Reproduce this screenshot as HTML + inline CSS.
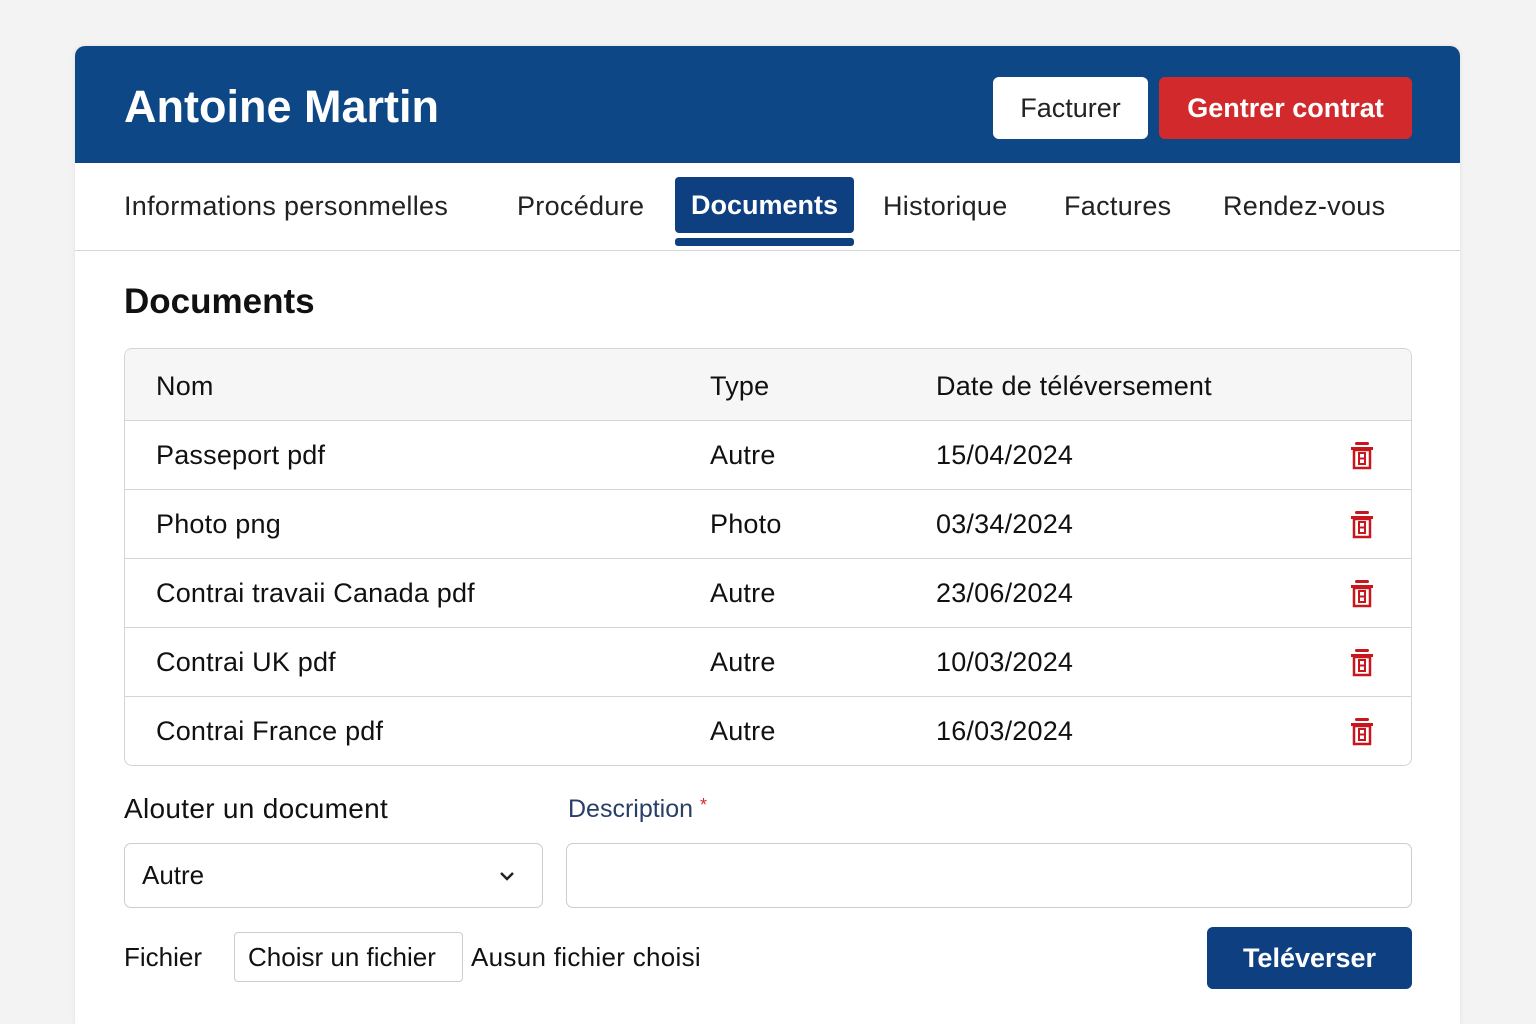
<!DOCTYPE html>
<html><head><meta charset="utf-8"><style>
*{box-sizing:border-box;margin:0;padding:0}
html,body{width:1536px;height:1024px;overflow:hidden}
body{background:#f3f3f3;font-family:"Liberation Sans",sans-serif;color:#111;position:relative}
.card{position:absolute;left:75px;top:46px;width:1385px;height:978px;background:#fff;border-radius:10px 10px 0 0;box-shadow:0 0 6px rgba(0,0,0,.08);overflow:hidden}
.hdr{position:absolute;left:0;top:0;width:100%;height:117px;background:#0e4785}
.hdr h1{position:absolute;left:49px;top:35px;font-size:45px;color:#fff;font-weight:bold;letter-spacing:0}
.btn{position:absolute;top:31px;height:62px;border-radius:6px;font-size:27px;display:flex;align-items:center;justify-content:center}
.a{position:absolute;white-space:nowrap}
.tab{position:absolute;top:145px;font-size:27px;color:#222;letter-spacing:0.3px}
.tr{position:absolute;left:50px;width:1287px;border-top:1px solid #d4d4d4}
.row{position:absolute;font-size:27px;letter-spacing:0.2px}
</style></head><body>
<div class="card">
<div class="hdr"><h1>Antoine Martin</h1>
<div class="btn" style="left:918px;width:155px;background:#fff;color:#222">Facturer</div>
<div class="btn" style="left:1084px;width:253px;background:#d2292d;color:#fff;font-weight:bold">Gentrer contrat</div>
</div>
<div class="tab" style="left:49px">Informations personmelles</div>
<div class="tab" style="left:442px">Procédure</div>
<div class="a" style="left:600px;top:131px;width:179px;height:56px;background:#0e3f80;border-radius:4px;color:#fff;font-size:27px;font-weight:bold;display:flex;align-items:center;justify-content:center">Documents</div>
<div class="a" style="left:600px;top:192px;width:179px;height:8px;background:#0e3f80;border-radius:3px"></div>
<div class="tab" style="left:808px">Historique</div>
<div class="tab" style="left:989px">Factures</div>
<div class="tab" style="left:1148px">Rendez-vous</div>
<div class="a" style="left:0;top:204px;width:100%;border-top:1px solid #d6d6d6"></div>
<div class="a" style="left:49px;top:236px;font-size:35px;font-weight:bold">Documents</div>
<div class="a" style="left:49px;top:302px;width:1288px;height:418px;border:1px solid #d4d4d4;border-radius:8px;overflow:hidden">
 <div style="height:72px;background:#f6f6f6;border-bottom:1px solid #d4d4d4"></div>
</div>
<div class="row" style="left:81px;top:325px">Nom</div>
<div class="row" style="left:635px;top:325px">Type</div>
<div class="row" style="left:861px;top:325px">Date de téléversement</div>
<div class="tr" style="top:443px"></div><div class="tr" style="top:512px"></div><div class="tr" style="top:581px"></div><div class="tr" style="top:650px"></div>
<div id="rows"></div>
<div class="a" style="left:49px;top:747px;font-size:28px;letter-spacing:0.3px">Alouter un document</div>
<div class="a" style="left:493px;top:749px;font-size:25px;color:#2a3f66">Description <span style="color:#d2292d;font-size:18px;vertical-align:top">*</span></div>
<div class="a" style="left:49px;top:797px;width:419px;height:65px;border:1px solid #ccc;border-radius:7px;font-size:26px;padding:16px 0 0 17px">Autre
<svg style="position:absolute;left:374px;top:26px" width="16" height="12" viewBox="0 0 16 12"><path d="M2 3l6 6 6-6" stroke="#222" stroke-width="2.5" fill="none"/></svg></div>
<div class="a" style="left:491px;top:797px;width:846px;height:65px;border:1px solid #ccc;border-radius:7px"></div>
<div class="a" style="left:49px;top:896px;font-size:26px">Fichier</div>
<div class="a" style="left:159px;top:886px;width:229px;height:50px;border:1px solid #ccc;border-radius:4px;font-size:26px;padding:9px 0 0 13px">Choisr un fichier</div>
<div class="a" style="left:396px;top:896px;font-size:26px;letter-spacing:0.3px">Ausun fichier choisi</div>
<div class="a" style="left:1132px;top:881px;width:205px;height:62px;background:#0e3f80;border-radius:6px;color:#fff;font-size:27px;font-weight:bold;display:flex;align-items:center;justify-content:center">Teléverser</div>
</div>
<script>
var d=[["Passeport pdf","Autre","15/04/2024"],["Photo png","Photo","03/34/2024"],["Contrai travaii Canada pdf","Autre","23/06/2024"],["Contrai UK pdf","Autre","10/03/2024"],["Contrai France pdf","Autre","16/03/2024"]];
var h="";d.forEach(function(r,i){var t=394+i*69;
h+='<div class="row" style="left:81px;top:'+t+'px">'+r[0]+'</div><div class="row" style="left:635px;top:'+t+'px">'+r[1]+'</div><div class="row" style="left:861px;top:'+t+'px">'+r[2]+'</div>'+
'<svg class="a" style="left:1275px;top:'+(t+1)+'px" width="24" height="30" viewBox="0 0 24 30"><rect x="5" y="1" width="14" height="3" rx="1.5" fill="#c8161d"/><rect x="1" y="6" width="22" height="3" fill="#c8161d"/><rect x="4" y="9" width="16" height="18" fill="none" stroke="#c8161d" stroke-width="2.5"/><rect x="9" y="12" width="6" height="11" fill="none" stroke="#c8161d" stroke-width="2"/><line x1="9" y1="17.5" x2="15" y2="17.5" stroke="#c8161d" stroke-width="2"/></svg>';});
document.getElementById("rows").innerHTML=h;
</script>
</body></html>
